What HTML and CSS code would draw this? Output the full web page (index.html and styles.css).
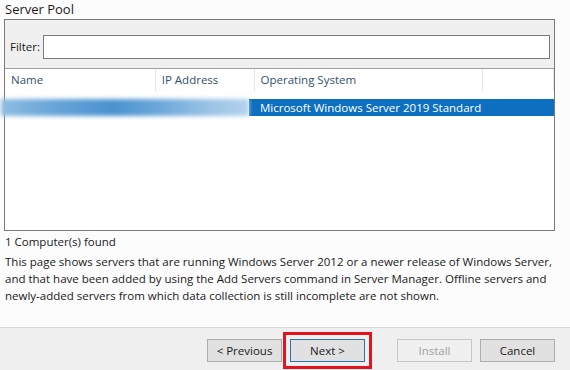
FILE: index.html
```html
<!DOCTYPE html>
<html lang="en">
<head>
    <meta charset="UTF-8">
    <meta name="viewport" content="width=device-width, initial-scale=1.0">
    <title>Server Pool</title>
    <link rel="stylesheet" href="styles.css">
</head>
<body>

    <div class="page">
        <div class="content">
            <h2 class="title">Server Pool</h2>
            <div class="pool">
                <div class="filter">
                    <label for="filter">Filter:</label>
                    <input type="text" id="filter" class="filter-input">
                </div>
                <div class="list">
                    <div class="list-head">
                        <div class="col col-name">Name</div>
                        <div class="col col-ip">IP Address</div>
                        <div class="col col-os">Operating System</div>
                        <div class="col col-rest"></div>
                    </div>
                    <div class="list-row">
                        <div class="cell-blur"></div>
                        <div class="cell-os">Microsoft Windows Server 2019 Standard</div>
                    </div>
                </div>
            </div>
            <p class="found">1 Computer(s) found</p>
            <p class="note">This page shows servers that are running Windows Server 2012 or a newer release of Windows Server, and that have been added by using the Add Servers command in Server Manager. Offline servers and newly-added servers from which data collection is still incomplete are not shown.</p>
        </div>

        <div class="footer">
            <button class="btn">&lt; Previous</button>
            <button class="btn btn-next">Next &gt;</button>
            <button class="btn btn-install" disabled>Install</button>
            <button class="btn">Cancel</button>
        </div>
    </div>

</body>
</html>
```

FILE: styles.css
```css
*{
    margin: 0;
    padding: 0;
    box-sizing: border-box;
}
body{
    background-color: #fcfcfc;
    font-family: "Open Sans", "Noto Sans", sans-serif;
    font-size: 11.5px;
    color: #1a1a1a;
    overflow: hidden;
}
.page{
    width: 570px;
    height: 370px;
    display: flex;
    flex-direction: column;
}
.content{
    height: 327px;
}
.title{
    font-size: 13px;
    font-weight: normal;
    line-height: 19px;
    padding-left: 5px;
    color: #1a1a1a;
}
.pool{
    margin-left: 4px;
    width: 551px;
    height: 212px;
    border: 1px solid #7a7a7a;
    display: flex;
    flex-direction: column;
}
.filter{
    height: 49px;
    background-color: #f0f0f0;
    border-bottom: 1px solid #a0a0a0;
    display: flex;
    align-items: center;
    padding: 5px 0 0 5px;
}
.filter label{
    width: 33px;
}
.filter-input{
    width: 507px;
    height: 24px;
    border: 1px solid #7a7a7a;
    background-color: #fff;
    outline: none;
}
.list{
    flex: 1;
    background-color: #fff;
}
.list-head{
    display: flex;
    height: 22px;
}
.list-head .col{
    border-right: 1px solid #e5e5e5;
    color: #33506e;
    line-height: 22px;
    padding-left: 6px;
}
.col-name{
    width: 151px;
}
.col-ip{
    width: 99px;
}
.col-os{
    width: 229px;
}
.list-head .col-rest{
    width: 71px;
}
.list-row{
    display: flex;
    height: 17px;
    margin-top: 8px;
}
.cell-blur{
    width: 248px;
    margin-left: -4px;
    background: linear-gradient(90deg, #8fbde2 0%, #6aa6d8 20%, #4a92cf 45%, #6fa9da 65%, #9cc4e6 85%, #b4d3ee 100%);
    filter: blur(2px);
}
.cell-os{
    flex: 1;
    background-color: #0c6fc0;
    color: #fff;
    line-height: 17px;
    padding-left: 11px;
}
.found{
    margin-top: 2px;
    padding-left: 5px;
    line-height: 17px;
}
.note{
    margin-top: 3px;
    padding: 0 10px 0 5px;
    line-height: 17px;
}
.footer{
    flex: 1;
    background-color: #efefef;
    border-top: 1px solid #d9d9d9;
    display: flex;
    justify-content: flex-end;
    padding: 11px 15px 0 0;
    gap: 8px;
}
.btn{
    width: 75px;
    height: 23px;
    background-color: #e1e1e1;
    border: 1px solid #adadad;
    font-family: "Open Sans", "Noto Sans", sans-serif;
    font-size: 11.5px;
    color: #1a1a1a;
}
.btn-next{
    border-color: #2b74b8;
    outline: 3px solid #e3131b;
    outline-offset: 4px;
}
.btn-install{
    margin-left: 24px;
    background-color: #f0f0f0;
    border-color: #c6c6c6;
    color: #a0a0a0;
}
```
